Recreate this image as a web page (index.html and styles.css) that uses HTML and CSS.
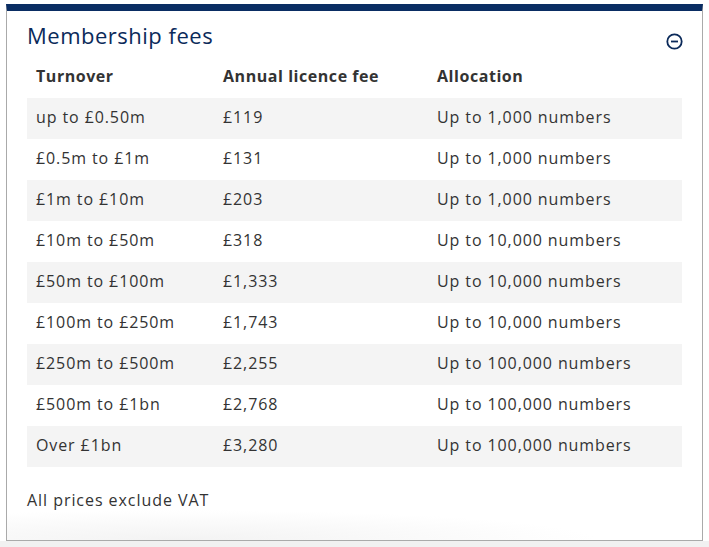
FILE: index.html
```html
<!DOCTYPE html>
<html lang="en">
<head>
<meta charset="utf-8">
<title>Membership fees</title>
<link rel="stylesheet" href="styles.css">
</head>
<body>
<div class="page">
  <section class="panel">
    <div class="panel-head">
      <h2 class="title">Membership fees</h2>
      <svg class="toggle" width="17" height="17" viewBox="0 0 17 17" aria-hidden="true">
        <circle cx="8.5" cy="8.5" r="7.2" fill="none" stroke="#0b2a5a" stroke-width="1.8"/>
        <line x1="5" y1="8.5" x2="12" y2="8.5" stroke="#0b2a5a" stroke-width="1.8"/>
      </svg>
    </div>
    <table class="fees">
      <thead>
        <tr><th class="c1">Turnover</th><th class="c2">Annual licence fee</th><th class="c3">Allocation</th></tr>
      </thead>
      <tbody>
        <tr><td>up to £0.50m</td><td>£119</td><td>Up to 1,000 numbers</td></tr>
        <tr><td>£0.5m to £1m</td><td>£131</td><td>Up to 1,000 numbers</td></tr>
        <tr><td>£1m to £10m</td><td>£203</td><td>Up to 1,000 numbers</td></tr>
        <tr><td>£10m to £50m</td><td>£318</td><td>Up to 10,000 numbers</td></tr>
        <tr><td>£50m to £100m</td><td>£1,333</td><td>Up to 10,000 numbers</td></tr>
        <tr><td>£100m to £250m</td><td>£1,743</td><td>Up to 10,000 numbers</td></tr>
        <tr><td>£250m to £500m</td><td>£2,255</td><td>Up to 100,000 numbers</td></tr>
        <tr><td>£500m to £1bn</td><td>£2,768</td><td>Up to 100,000 numbers</td></tr>
        <tr><td>Over £1bn</td><td>£3,280</td><td>Up to 100,000 numbers</td></tr>
      </tbody>
    </table>
    <p class="note">All prices exclude VAT</p>
  </section>
</div>
</body>
</html>
```
FILE: styles.css
```css
html, body {
  margin: 0;
  padding: 0;
}
body {
  background: linear-gradient(#ffffff 0, #ffffff 541px, #f1f1f1 541px);
  min-height: 547px;
  font-family: "Open Sans", "Liberation Sans", sans-serif;
  color: #333333;
}
.page {
  padding: 4px 6px 0 6px;
}
.panel {
  border: 1px solid #aaaaaa;
  border-top: 7px solid #0a2d63;
  padding: 0 20px 30px 20px;
  background: radial-gradient(ellipse 60% 30px at 25% 100%, #f3f3f3, #ffffff);
  height: 499px;
  box-sizing: content-box;
}
.panel-head {
  display: flex;
  justify-content: space-between;
  align-items: flex-end;
  padding-top: 9px;
  margin-bottom: 7px;
}
.title {
  margin: 0;
  font-weight: 400;
  font-size: 22px;
  line-height: 30px;
  letter-spacing: 0.5px;
  color: #0b2a5a;
}
.toggle {
  display: block;
  margin-bottom: 0;
  margin-right: -1px;
}
.fees {
  width: 100%;
  border-collapse: collapse;
  font-size: 16px;
}
.fees th {
  text-align: left;
  font-weight: 700;
  height: 38px;
  padding: 0 9px 3px 9px;
  letter-spacing: 0.55px;
  color: #333333;
}
.fees td {
  height: 38px;
  padding: 0 9px 3px 9px;
  letter-spacing: 0.9px;
}
.fees tbody tr:nth-child(odd) {
  background: #f4f4f4;
}
.c1 { width: 169px; }
.c2 { width: 196px; }
.note {
  margin: 22px 0 0 0;
  font-size: 16px;
  line-height: 22px;
  letter-spacing: 0.95px;
}
```
